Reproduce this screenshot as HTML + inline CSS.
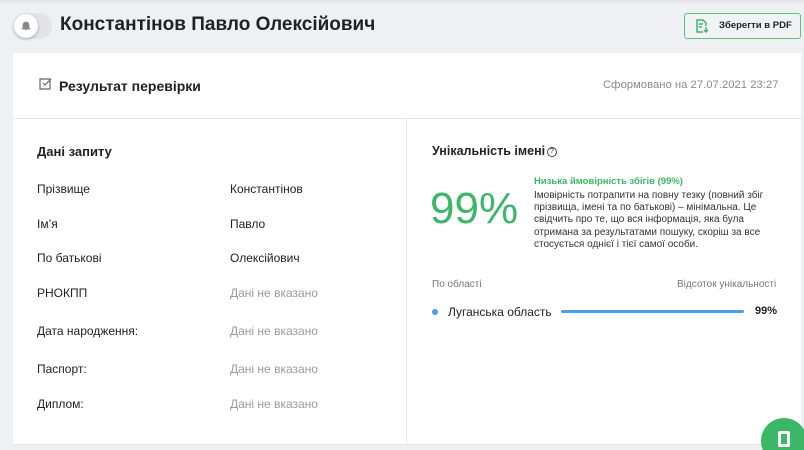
<!DOCTYPE html>
<html><head><meta charset="utf-8"><style>
*{margin:0;padding:0;box-sizing:border-box}
html,body{width:804px;height:450px;overflow:hidden}
body{background:#eef0f4;font-family:"Liberation Sans",sans-serif;color:#222;position:relative}
.a{position:absolute;white-space:nowrap}
.card{position:absolute;left:13px;top:53px;width:788px;height:392px;background:#fff;border-bottom:1px solid #e3e5ea}
.lbl{font-size:12px;color:#222}
.val{font-size:12px;color:#222}
.na{font-size:12px;color:#9a9a9a}
</style></head><body>
<div class="a" style="left:0;top:0;width:804px;height:4px;background:linear-gradient(#dfe1e5,#eef0f4)"></div>
<div class="a" style="left:14px;top:13px;width:38px;height:26px;border-radius:13px;background:#e2e4e8"></div>
<div class="a" style="left:14px;top:14px;width:24px;height:24px;border-radius:12px;background:#fff;box-shadow:0 1px 3px rgba(0,0,0,.3)"></div>
<svg class="a" style="left:20px;top:20px" width="12" height="12" viewBox="0 0 12 12"><path d="M3 8V5a3 3 0 0 1 6 0v3l1 1H2z M5 10h2" fill="#888" stroke="#888" stroke-width=".8"/></svg>
<div class="a" style="left:60px;top:14px;font-size:19px;font-weight:bold;color:#222">Константінов Павло Олексійович</div>
<div class="a" style="left:684px;top:13px;width:117px;height:26px;border:1px solid #5ac47d;border-radius:3px;background:#f1f3f5"></div>
<svg class="a" style="left:694px;top:18px" width="16" height="16" viewBox="0 0 16 16" fill="none" stroke="#3bb767" stroke-width="1.5"><path d="M9 14H3V2h6l3 3v3M5 6h4M5 9h3M12 9v5M10 12l2 2 2-2"/></svg>
<div class="a" style="left:719px;top:20px;font-size:9.5px;font-weight:bold;color:#222">Зберегти в PDF</div>
<div class="card"></div>
<svg class="a" style="left:39px;top:77px" width="14" height="14" viewBox="0 0 14 14" fill="none" stroke="#666" stroke-width="1.2"><path d="M1 2h10v10H1zM4 6l2 2 6-6"/></svg>
<div class="a" style="left:59px;top:78px;font-size:14px;font-weight:bold;color:#222">Результат перевірки</div>
<div class="a" style="left:603px;top:79px;font-size:11.3px;color:#8a8a8a">Сформовано на 27.07.2021 23:27</div>
<div class="a" style="left:13px;top:118px;width:788px;height:1px;background:#e6e8ec"></div>
<div class="a" style="left:406px;top:119px;width:1px;height:325px;background:#e6e8ec"></div>
<div class="a" style="left:37px;top:144px;font-size:13px;font-weight:bold">Дані запиту</div>
<div class="a lbl" style="left:37px;top:182px">Прізвище</div><div class="a val" style="left:230px;top:182px">Константінов</div>
<div class="a lbl" style="left:37px;top:217px">Ім’я</div><div class="a val" style="left:230px;top:217px">Павло</div>
<div class="a lbl" style="left:37px;top:251px">По батькові</div><div class="a val" style="left:230px;top:251px">Олексійович</div>
<div class="a lbl" style="left:37px;top:286px">РНОКПП</div><div class="a na" style="left:230px;top:286px">Дані не вказано</div>
<div class="a lbl" style="left:37px;top:324px">Дата народження:</div><div class="a na" style="left:230px;top:324px">Дані не вказано</div>
<div class="a lbl" style="left:37px;top:362px">Паспорт:</div><div class="a na" style="left:230px;top:362px">Дані не вказано</div>
<div class="a lbl" style="left:37px;top:397px">Диплом:</div><div class="a na" style="left:230px;top:397px">Дані не вказано</div>
<div class="a" style="left:432px;top:144px;font-size:12.5px;font-weight:bold">Унікальність імені</div>
<div class="a" style="left:547px;top:147px;width:10px;height:10px;border:1px solid #444;border-radius:50%;font-size:7px;text-align:center;line-height:8px">?</div>
<div class="a" style="left:430px;top:184px;font-size:44px;color:#3bb767">99%</div>
<div class="a" style="left:534px;top:176px;font-size:9.5px;font-weight:bold;color:#3bb767">Низька ймовірність збігів (99%)</div>
<div class="a" style="left:534px;top:190px;font-size:10px;line-height:12.2px;color:#333">Імовірність потрапити на повну тезку (повний збіг<br>прізвища, імені та по батькові) – мінімальна. Це<br>свідчить про те, що вся інформація, яка була<br>отримана за результатами пошуку, скоріш за все<br>стосується однієї і тієї самої особи.</div>
<div class="a" style="left:432px;top:279px;font-size:10px;color:#777">По області</div>
<div class="a" style="left:677px;top:279px;font-size:10px;color:#777">Відсоток унікальності</div>
<div class="a" style="left:432px;top:309px;width:6px;height:6px;border-radius:3px;background:#4a9fea"></div>
<div class="a" style="left:448px;top:305px;font-size:12px">Луганська область</div>
<div class="a" style="left:561px;top:310px;width:183px;height:3px;border-radius:2px;background:#4a9fea"></div>
<div class="a" style="left:755px;top:305px;font-size:11px;font-weight:bold">99%</div>
<div class="a" style="left:761px;top:418px;width:46px;height:46px;border-radius:50%;background:#3bb767"></div>
<div class="a" style="left:778px;top:431px;width:12px;height:16px;border:3px solid #fff;border-radius:2px"></div>
</body></html>
